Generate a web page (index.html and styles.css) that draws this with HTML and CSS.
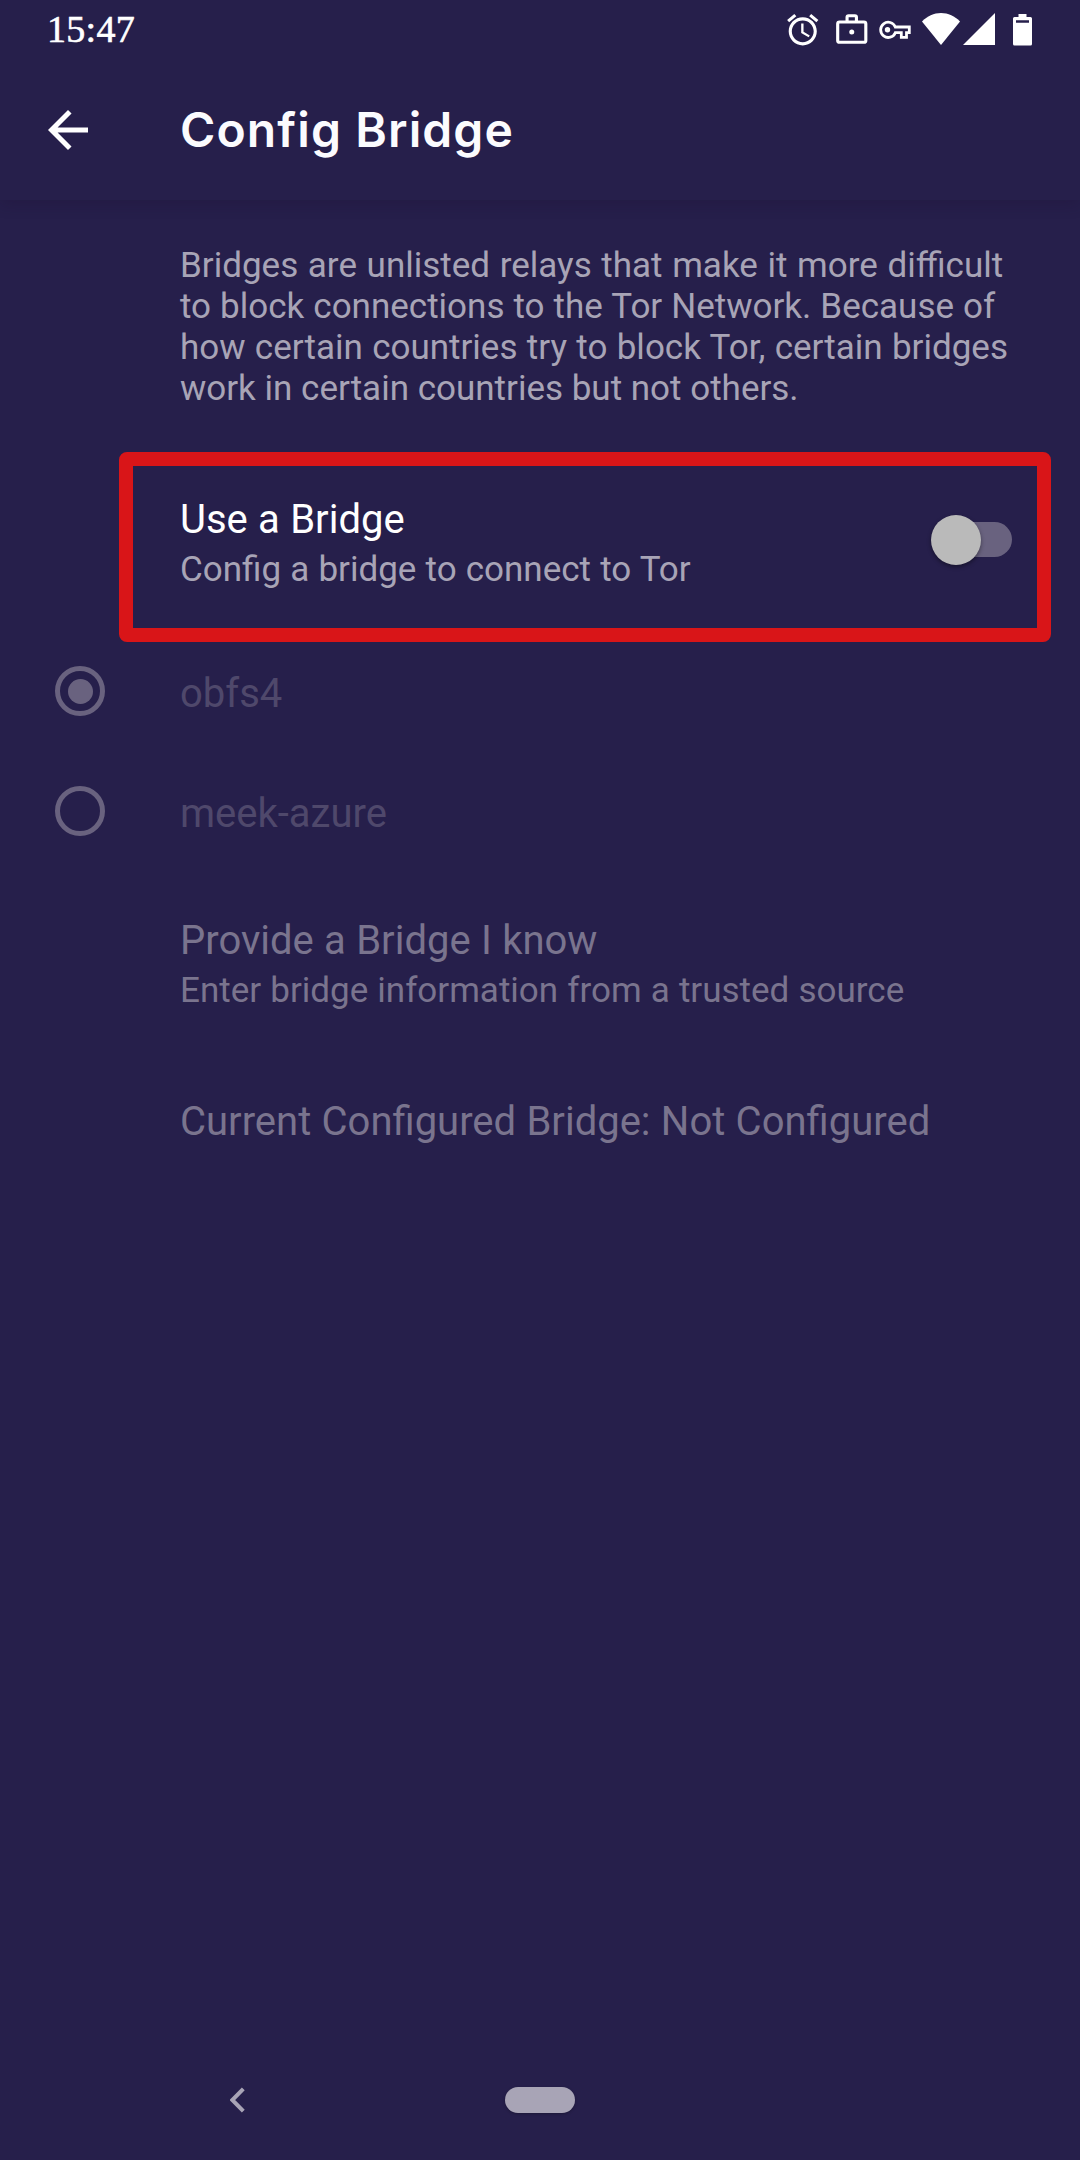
FILE: index.html
```html
<!DOCTYPE html>
<html lang="en">
<head>
<meta charset="utf-8">
<title>Config Bridge</title>
<link rel="stylesheet" href="styles.css">
</head>
<body>
<div class="screen">
  <header class="top">
    <div class="status">
      <span class="clock">15:47</span>
      <div class="status-icons">
        <svg class="alarm" viewBox="0 0 24 24"><path d="M22 5.720l-4.600-3.860-1.290 1.530 4.600 3.860L22 5.720zM7.880 3.390L6.600 1.860 2 5.710l1.290 1.530 4.590-3.850zM12.500 8H11v6l4.750 2.850.75-1.230-4-2.370V8zM12 4c-4.970 0-9 4.030-9 9s4.020 9 9 9c4.970 0 9-4.030 9-9s-4.030-9-9-9zm0 16c-3.870 0-7-3.130-7-7s3.130-7 7-7 7 3.130 7 7-3.130 7-7 7z"/></svg>
        <svg class="work" viewBox="0 0 24 24"><rect class="line" x="3" y="7" width="18" height="13" rx="1.200"/><path class="line" d="M9 6.500V4Q9 3 10 3H14Q15 3 15 4V6.500"/><circle cx="12" cy="13.500" r="1.600"/></svg>
        <svg class="key" viewBox="0 0 33 20"><path class="line" d="M17.300 7H31.300V12.700H28.500V17.300H23.300V12.700H17.300A7.600 7.600 0 1 1 17.300 7Z"/><circle cx="9.500" cy="9.800" r="2.700"/></svg>
        <svg class="wifi" viewBox="0 0 38 32"><path d="M19 32L0 8.500C5 3.200 12 0 19 0S33 3.200 38 8.500Z"/></svg>
        <svg class="signal" viewBox="0 0 32 32"><path d="M0 32L32 0V32Z"/></svg>
        <svg class="battery" viewBox="0 0 19 32"><path fill-rule="evenodd" d="M5.500 0H13.500V3H17.500Q19 3 19 4.500V30Q19 31.500 17.500 31.500H1.500Q0 31.500 0 30V4.500Q0 3 1.500 3H5.500ZM3 6.300V8.700H16V6.300Z"/></svg>
      </div>
    </div>
    <div class="toolbar">
      <svg class="back" viewBox="0 0 24 24"><path d="M20 11H7.830l5.590-5.590L12 4l-8 8 8 8 1.410-1.410L7.830 13H20v-2z"/></svg>
      <h1 class="title">Config Bridge</h1>
    </div>
  </header>
  <main class="content">
    <p class="description"><span class="loose">Bridges are unlisted relays that make it more difficult</span><br><span class="slight">to block connections to the Tor Network. Because of</span><br><span class="medium">how certain countries try to block Tor, certain bridges</span><br>work in certain countries but not others.</p>
    <section class="highlight">
      <div class="texts">
        <div class="label">Use a Bridge</div>
        <div class="sub">Config a bridge to connect to Tor</div>
      </div>
      <div class="switch"><span class="thumb"></span></div>
    </section>
    <div class="option"><span class="radio"><span class="dot"></span></span><span class="option-text">obfs4</span></div>
    <div class="option"><span class="radio"></span><span class="option-text">meek-azure</span></div>
    <section class="item provide">
      <div class="label">Provide a Bridge I know</div>
      <div class="sub">Enter bridge information from a trusted source</div>
    </section>
    <section class="item current">
      <div class="label">Current Configured Bridge: Not Configured</div>
    </section>
  </main>
  <nav class="nav">
    <svg class="nav-back" viewBox="0 0 15 26"><path d="M13.300 1.800L2.300 13L13.300 24.200"/></svg>
    <span class="pill"></span>
  </nav>
</div>
</body>
</html>
```
FILE: styles.css
```css
* { box-sizing: border-box; }
body { margin: 0; background: #261f4b; color: #fff; font-family: Roboto, sans-serif; }
svg { display: block; fill: #fff; flex: none; }
.screen { width: 1080px; height: 2160px; display: flex; flex-direction: column; overflow: hidden; }

.top { height: 200px; flex: none; box-shadow: 0 4px 14px rgba(28, 12, 45, .24); }
.status { height: 60px; display: flex; justify-content: space-between; padding: 0 48px 0 47px; }
.clock { font: 38px/44px "Liberation Serif", serif; padding-top: 7px; letter-spacing: .3px; -webkit-text-stroke: .6px #fff; }
.status-icons { display: flex; align-items: flex-start; }
.alarm, .work { width: 37.5px; height: 37.5px; margin-top: 11px; }
.work { margin-left: 11.5px; }
.work .line { fill: none; stroke: #fff; stroke-width: 2; }
.key { width: 33px; height: 20px; margin: 19.8px 1px 0 7.2px; }
.key .line { fill: none; stroke: #fff; stroke-width: 2.8; }
.wifi { width: 38px; height: 32px; margin: 13px 0 0 10.5px; }
.signal { width: 32px; height: 32px; margin: 13px 0 0 3px; }
.battery { width: 19px; height: 32px; margin: 13.7px 0 0 18px; }

.toolbar { height: 140px; display: flex; align-items: center; padding-left: 38px; }
.back { width: 60px; height: 60px; }
.title { margin: 0 0 0 82px; font: 600 48px/60px Inter, sans-serif; letter-spacing: 1.1px; color: #fbfbfe; }

.content { flex: 1; }
.description { margin: 45px 0 0 180px; font-size: 35px; line-height: 41px; color: #a8a4b6; white-space: nowrap; }
.loose { word-spacing: .95px; }
.medium { word-spacing: .65px; }
.slight { word-spacing: .35px; }
.highlight { width: 932px; height: 190px; margin: 43px 0 0 119px; border: 14px solid #d91518; border-radius: 8px; display: flex; justify-content: space-between; padding: 30px 25px 0 47px; }
.label { font-size: 40px; line-height: 47px; word-spacing: .4px; }
.sub { font-size: 35px; line-height: 41px; margin-top: 6px; color: #a8a4b6; word-spacing: .45px; }
.switch { position: relative; width: 75px; height: 35px; margin-top: 26px; border-radius: 18px; background: #69627f; }
.thumb { position: absolute; left: -6px; top: -7px; width: 50px; height: 50px; border-radius: 50%; background: #bababa; box-shadow: 0 2px 4px rgba(0, 0, 0, .4); }

.option { height: 120px; display: flex; align-items: center; padding-left: 55px; }
.highlight + .option { margin-top: -11px; }
.radio { width: 50px; height: 50px; border: 5px solid #69627f; border-radius: 50%; display: grid; place-items: center; }
.dot { width: 25px; height: 25px; border-radius: 50%; background: #69627f; }
.option-text { margin: 4px 0 0 75px; font-size: 40px; line-height: 47px; color: #4f486b; }

.item { margin-left: 180px; white-space: nowrap; }
.item, .item .sub { color: #7a748e; }
.provide { margin-top: 46px; }
.current { margin-top: 87px; }

.nav { height: 120px; flex: none; display: flex; align-items: center; padding-left: 230px; }
.nav-back { width: 15px; height: 26px; }
.nav-back path { fill: none; stroke: #a8a4b6; stroke-width: 4; }
.pill { width: 70px; height: 26px; margin-left: 260px; border-radius: 13px; background: #a8a4b6; box-shadow: 0 1px 3px rgba(0, 0, 0, .25); }
```
